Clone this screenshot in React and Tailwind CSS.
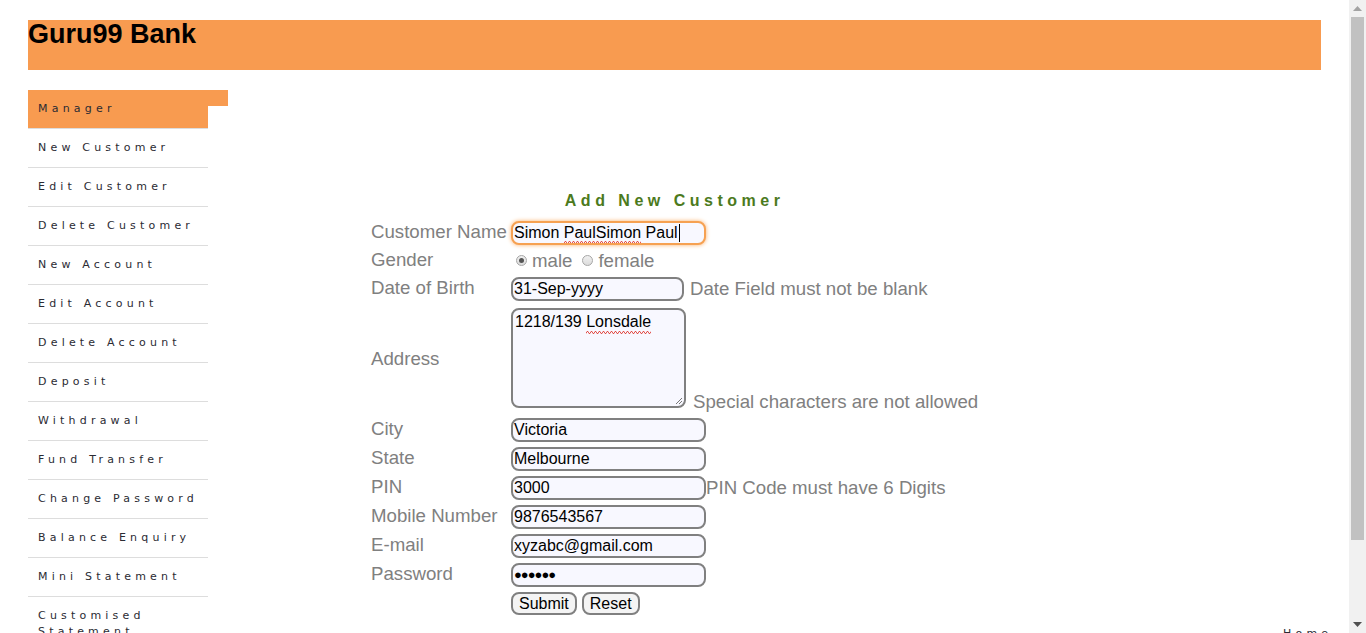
import React from 'react';

const ORANGE = 'bg-[#f89b50]';

const menu = [
  'New Customer',
  'Edit Customer',
  'Delete Customer',
  'New Account',
  'Edit Account',
  'Delete Account',
  'Deposit',
  'Withdrawal',
  'Fund Transfer',
  'Change Password',
  'Balance Enquiry',
  'Mini Statement',
  'Customised Statement',
  'Log out',
];

function Field({ children, width = 'w-[195px]', focus = false }) {
  return (
    <div
      className={`${width} h-[24px] rounded-[8px] border-2 bg-[#f8f8ff] pl-[1px] text-[16px] leading-[20px] text-black whitespace-nowrap overflow-hidden flex items-center ${
        focus ? 'border-[#f6a152] shadow-[0_0_4px_#fbb06a]' : 'border-[#808080]'
      }`}
    >
      {children}
    </div>
  );
}

function Row({ label, children, h = 'h-[29px]' }) {
  return (
    <div className={`flex items-center ${h}`}>
      <div className="w-[140px] shrink-0 pb-[2px]">{label}</div>
      <div className="flex items-center">{children}</div>
    </div>
  );
}

function Radio({ checked }) {
  return (
    <span className="inline-flex w-[11px] h-[11px] rounded-full border border-[#a6a6a6] bg-gradient-to-b from-[#f0f0f0] to-[#dcdcdc] items-center justify-center mr-[5px]">
      {checked && <span className="w-[5px] h-[5px] rounded-full bg-[#555]" />}
    </span>
  );
}

// spell-check style red wavy line under a word
function Misspelt({ children, id }) {
  return (
    <span className="relative inline-block">
      {children}
      <svg className="absolute left-0 bottom-[-1px] w-full h-[3px]" preserveAspectRatio="none">
        <defs>
          <pattern id={id} width="4" height="3" patternUnits="userSpaceOnUse">
            <path d="M0 2.5 L1 0.5 L2 0.5 L3 2.5 L4 2.5" stroke="#e0413a" strokeWidth="0.9" fill="none" />
          </pattern>
        </defs>
        <rect width="100%" height="3" fill={`url(#${id})`} />
      </svg>
    </span>
  );
}

export default function App() {
  return (
    <div className="flex h-[633px] overflow-hidden bg-white" style={{ fontFamily: '"Liberation Sans", Arial, sans-serif' }}>
      <div className="flex-1 min-w-0 px-[28px] pt-[20px]">
        {/* header */}
        <div className={`${ORANGE} h-[50px]`}>
          <h1 className="text-[27px] font-bold leading-[29px] text-black">Guru99 Bank</h1>
        </div>

        <div className="flex mt-[20px]">
          {/* sidebar */}
          <ul className="w-[180px] shrink-0" style={{ fontFamily: '"DejaVu Sans", Verdana, sans-serif' }}>
            <li className={`relative ${ORANGE} border-b border-[#dddddd] pl-[10px] py-[11px] leading-[16px] text-[11px] tracking-[4.2px] text-[#2b2b33]`}>
              Manager
              <span className={`absolute left-full top-0 w-[20px] h-[16px] ${ORANGE}`} />
            </li>
            {menu.map((m) => (
              <li
                key={m}
                className="border-b border-[#dddddd] pl-[10px] py-[11px] leading-[16px] text-[11px] tracking-[4.2px] text-[#2b2b33]"
              >
                {m}
              </li>
            ))}
          </ul>

          {/* content */}
          <div className="flex-1 min-w-0">
            <div className="ml-[163px] mt-[99px] w-fit text-[18.67px] text-[#808080]">
              <div className="h-[24px] leading-[24px] text-center text-[16px] font-bold tracking-[4.5px] text-[#4c7a1d]">
                Add New Customer
              </div>
              <div className="mt-[5px]">
                <Row label="Customer Name">
                  <Field focus>
                    <span>
                      Simon <Misspelt id="sq1">PaulSimon</Misspelt> Paul
                    </span>
                    <span className="w-px h-[18px] bg-black ml-[1px]" />
                  </Field>
                </Row>
                <Row label="Gender" h="h-[27px]">
                  <div className="flex items-center pl-[5px] leading-[20px]">
                    <Radio checked />
                    <span className="mr-[10px]">male</span>
                    <Radio />
                    <span>female</span>
                  </div>
                </Row>
                <Row label="Date of Birth">
                  <Field width="w-[173px]">31-Sep-yyyy</Field>
                  <span className="ml-[6px]">Date Field must not be blank</span>
                </Row>
                <div className="flex h-[112px]">
                  <div className="w-[140px] shrink-0 self-center">Address</div>
                  <div className="flex items-end pt-[5px] h-[105px]">
                    <div className="relative w-[175px] h-[100px] rounded-[8px] border-2 border-[#808080] bg-[#f8f8ff] pl-[2px] pt-[1px] text-[16px] leading-[22px] text-black">
                      1218/139 <Misspelt id="sq2">Lonsdale</Misspelt>
                      <svg className="absolute right-[1px] bottom-[1px]" width="9" height="9" viewBox="0 0 9 9">
                        <path d="M8 2 L2 8 M8 5 L5 8" stroke="#777" strokeWidth="1" />
                      </svg>
                    </div>
                    <span className="ml-[7px] leading-[18px] mb-[-3px]">Special characters are not allowed</span>
                  </div>
                </div>
                <Row label="City">
                  <Field>Victoria</Field>
                </Row>
                <Row label="State">
                  <Field>Melbourne</Field>
                </Row>
                <Row label="PIN">
                  <Field>3000</Field>
                  <span>PIN Code must have 6 Digits</span>
                </Row>
                <Row label="Mobile Number">
                  <Field>9876543567</Field>
                </Row>
                <Row label="E-mail">
                  <Field>xyzabc@gmail.com</Field>
                </Row>
                <Row label="Password">
                  <Field>
                    <span className="text-[13px] tracking-[-1px]">●●●●●●</span>
                  </Field>
                </Row>
                <Row label="">
                  <div className="flex gap-[5px]">
                    <button className="h-[23px] px-[6px] rounded-[8px] border-2 border-[#808080] bg-[#f4f4f4] text-[16px] leading-[18px] text-black">
                      Submit
                    </button>
                    <button className="h-[23px] px-[6px] rounded-[8px] border-2 border-[#808080] bg-[#f4f4f4] text-[16px] leading-[18px] text-black">
                      Reset
                    </button>
                  </div>
                </Row>
              </div>
            </div>
            <div
              className="ml-[1075px] mt-[8px] text-[11px] tracking-[4.2px] text-[#2b2b33] whitespace-nowrap"
              style={{ fontFamily: '"DejaVu Sans", Verdana, sans-serif' }}
            >
              Home
            </div>
          </div>
        </div>
      </div>

      {/* scrollbar */}
      <div className="w-[17px] shrink-0 bg-[#f1f1f1] flex flex-col items-center">
        <div className="h-[17px] flex items-center justify-center">
          <svg width="9" height="5" viewBox="0 0 9 5"><path d="M0 5 L4.5 0 L9 5 Z" fill="#a3a3a3" /></svg>
        </div>
        <div className="w-[13px] h-[523px] bg-[#c1c1c1]" />
        <div className="flex-1" />
        <div className="h-[17px] flex items-center justify-center">
          <svg width="9" height="5" viewBox="0 0 9 5"><path d="M0 0 L9 0 L4.5 5 Z" fill="#505050" /></svg>
        </div>
      </div>
    </div>
  );
}
